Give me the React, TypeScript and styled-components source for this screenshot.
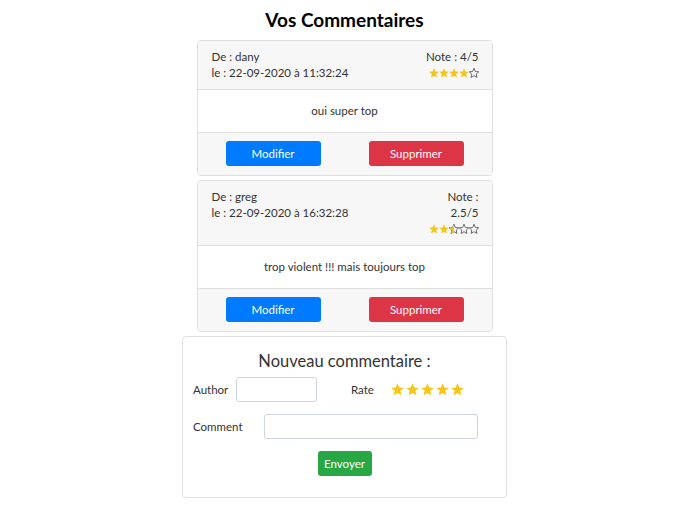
import { FC } from "react";
import styled, { createGlobalStyle } from "styled-components";

const GlobalStyle = createGlobalStyle`
  body {
    margin: 0;
    background: #fff;
    font-family: Lato, "Noto Sans", sans-serif;
    color: #212529;
  }
`;

const STAR = "M12 2l2.9 6.9 7.1.6-5.4 4.7 1.6 7.1L12 17.6 5.8 21.3l1.6-7.1L2 9.5l7.1-.6z";

type StarProps = { fill: number; size: number; outline?: boolean };

let starId = 0;

const Star: FC<StarProps> = ({ fill, size, outline }) => {
  const id = `star-clip-${starId++}`;
  return (
    <svg width={size} height={size} viewBox="1.5 1.5 21 21">
      <defs>
        <clipPath id={id}>
          <rect x="0" y="0" width={24 * fill} height="24" />
        </clipPath>
      </defs>
      {outline && fill < 1 && (
        <path d={STAR} fill="none" stroke="#444" strokeWidth="1.6" strokeLinejoin="round" />
      )}
      <path d={STAR} fill="#f5c518" clipPath={`url(#${id})`} />
    </svg>
  );
};

const Stars: FC<{ value: number; size: number; gap?: number; height?: number; outline?: boolean }> = ({
  value,
  size,
  gap = 0,
  height,
  outline,
}) => (
  <StarRow $gap={gap} $height={height ?? size}>
    {[0, 1, 2, 3, 4].map((i) => (
      <Star key={i} size={size} outline={outline} fill={Math.max(0, Math.min(1, value - i))} />
    ))}
  </StarRow>
);

const comments = [
  { author: "dany", date: "22-09-2020 à 11:32:24", rate: 4, text: "oui super top" },
  { author: "greg", date: "22-09-2020 à 16:32:28", rate: 2.5, text: "trop violent !!! mais toujours top" },
];

const App: FC = () => {
  return (
    <Page>
      <GlobalStyle />
      <Title>Vos Commentaires</Title>
      {comments.map((c) => (
        <Card key={c.author}>
          <CardHeader>
            <div>
              <div>De : {c.author}</div>
              <div>le : {c.date}</div>
            </div>
            <Note>
              <div>Note : {c.rate}/5</div>
              <Stars value={c.rate} size={10} height={16} outline />
            </Note>
          </CardHeader>
          <CardBody>{c.text}</CardBody>
          <CardFooter>
            <Button $color="#007bff">Modifier</Button>
            <Button $color="#dc3545">Supprimer</Button>
          </CardFooter>
        </Card>
      ))}
      <Form>
        <FormTitle>Nouveau commentaire :</FormTitle>
        <FormRow>
          <Label>Author</Label>
          <Input $width={81} />
          <RateLabel>Rate</RateLabel>
          <Stars value={5} size={13} gap={2} />
        </FormRow>
        <FormRow>
          <Label $width={71}>Comment</Label>
          <Input $width={214} />
        </FormRow>
        <Submit>Envoyer</Submit>
      </Form>
    </Page>
  );
};

export default App;

const Page = styled.div`
  display: flex;
  flex-direction: column;
  align-items: center;
  padding-top: 8px;
`;

const Title = styled.h1`
  margin: 0 0 8px;
  font-size: 19px;
  font-weight: 700;
  line-height: 24px;
  color: #000;
`;

const Card = styled.div`
  width: 294px;
  border: 1px solid #dfdfdf;
  border-radius: 4px;
  margin-bottom: 4px;
  font-size: 11.5px;
  line-height: 16px;
  color: #333;
  overflow: hidden;
`;

const CardHeader = styled.div`
  display: flex;
  justify-content: space-between;
  background: #f7f7f7;
  padding: 8px 13px 8px 14px;
  border-bottom: 1px solid #dfdfdf;
`;

const Note = styled.div`
  width: 56px;
  text-align: right;
  display: flex;
  flex-direction: column;
  align-items: flex-end;
`;

const StarRow = styled.div<{ $gap: number; $height: number }>`
  display: flex;
  align-items: center;
  height: ${(p) => p.$height}px;
  gap: ${(p) => p.$gap}px;
`;

const CardBody = styled.div`
  background: #fff;
  text-align: center;
  padding: 13px;
  border-bottom: 1px solid #dfdfdf;
`;

const CardFooter = styled.div`
  display: flex;
  justify-content: center;
  gap: 48px;
  background: #f7f7f7;
  padding: 8px 14px 9px;
`;

const Button = styled.button<{ $color: string }>`
  width: 95px;
  height: 25px;
  border: none;
  border-radius: 3px;
  background: ${(p) => p.$color};
  color: #fff;
  font-family: inherit;
  font-size: 11.5px;
`;

const Form = styled.div`
  width: 325px;
  box-sizing: border-box;
  border: 1px solid #dfdfdf;
  border-radius: 4px;
  padding: 12px 10px 21px;
  display: flex;
  flex-direction: column;
  font-size: 11.5px;
  color: #333;
`;

const FormTitle = styled.div`
  text-align: center;
  font-size: 16.5px;
  line-height: 24px;
  margin-bottom: 4px;
`;

const FormRow = styled.div`
  display: flex;
  align-items: center;
  margin-bottom: 12px;
`;

const Label = styled.label<{ $width?: number }>`
  width: ${(p) => p.$width ?? 43}px;
`;

const RateLabel = styled.label`
  margin-left: 34px;
  width: 40px;
`;

const Input = styled.input<{ $width: number }>`
  width: ${(p) => p.$width}px;
  height: 25px;
  box-sizing: border-box;
  border: 1px solid #ced4da;
  border-radius: 3px;
`;

const Submit = styled.button`
  align-self: center;
  width: 54px;
  height: 25px;
  border: none;
  border-radius: 3px;
  background: #28a745;
  color: #fff;
  font-family: inherit;
  font-size: 11.5px;
`;
